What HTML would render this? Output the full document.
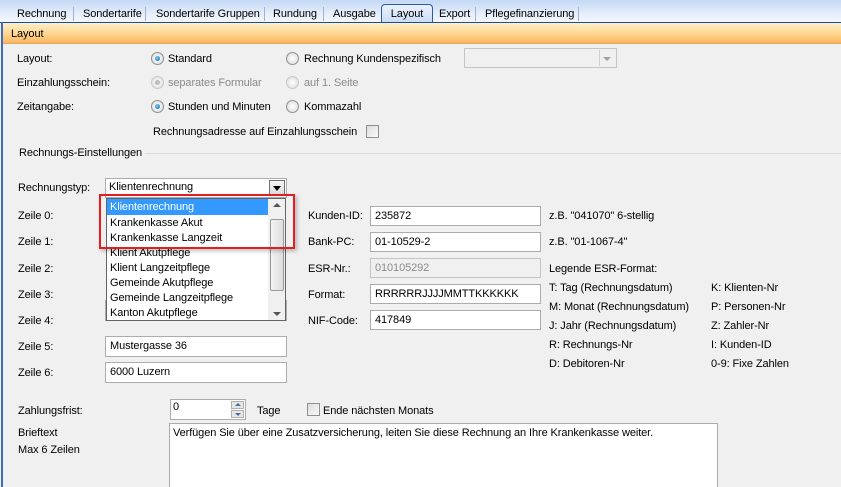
<!DOCTYPE html>
<html><head><meta charset="utf-8"><style>
*{margin:0;padding:0;box-sizing:border-box}
html,body{width:841px;height:487px;overflow:hidden}
body{background:#f0f0f0;font-family:"Liberation Sans",sans-serif;font-size:11px;letter-spacing:-0.1px;color:#000;position:relative}
.a{position:absolute;white-space:nowrap;line-height:14px}
.tabs{position:absolute;left:0;top:0;width:841px;height:23px;background:linear-gradient(#c3d8f4,#e6eefb 60%,#f5f8fd)}
.tab{position:absolute;top:7px;line-height:14px}
.sep{position:absolute;top:7px;width:1px;height:14px;background:#9fb4d4}
.sel{position:absolute;left:381px;top:4px;width:52px;height:19px;border:1px solid #2b5aa8;border-bottom:none;border-radius:4px 4px 0 0;background:linear-gradient(#eaf2fd,#c9dcf5);text-align:center;line-height:19px}
.blue{position:absolute;left:0;top:22px;width:841px;height:1px;background:#1b4c9e}
.lb{position:absolute;left:1px;top:22px;width:2px;height:465px;background:#3e6cc0}
.hdr{position:absolute;left:3px;top:23px;width:838px;height:21px;background:linear-gradient(#fff0c8,#ffd28a 60%,#ffb55c);border-bottom:1px solid #d7ac6a}
.in{position:absolute;background:#fff;border:1px solid #acacac;padding-left:4px;line-height:19px;height:21px;overflow:hidden;white-space:nowrap}
.dis{background:#f0f0f0;color:#8a8a8a;border-color:#c4c4c4}
.r{position:absolute;width:13px;height:13px;border-radius:50%;border:1px solid #8f8f8f;background:radial-gradient(#fff,#d8d8d8)}
.r.on::after{content:"";position:absolute;left:3px;top:3px;width:5px;height:5px;border-radius:50%;background:radial-gradient(circle at 40% 35%,#7fd0ff,#0b5fa8)}
.r.d{border-color:#c8c8c8}
.r.d.on::after{background:#bdbdbd}
.cb{position:absolute;width:13px;height:13px;border:1px solid #8f8f8f;background:linear-gradient(135deg,#dcdcdc,#fafafa)}
.g{color:#8a8a8a}
</style></head><body>
<div class="tabs"></div>
<div class="tab" style="left:17px">Rechnung</div><div class="sep" style="left:73px"></div>
<div class="tab" style="left:83px">Sondertarife</div><div class="sep" style="left:145px"></div>
<div class="tab" style="left:156px">Sondertarife Gruppen</div><div class="sep" style="left:264px"></div>
<div class="tab" style="left:273px">Rundung</div><div class="sep" style="left:323px"></div>
<div class="tab" style="left:333px">Ausgabe</div>
<div class="sel">Layout</div>
<div class="tab" style="left:439px">Export</div><div class="sep" style="left:475px"></div>
<div class="tab" style="left:485px">Pflegefinanzierung</div><div class="sep" style="left:578px"></div>
<div class="blue"></div>
<div class="hdr"></div>
<div class="a" style="left:11px;top:27px">Layout</div>
<div class="lb"></div>

<div class="a" style="left:17px;top:52px">Layout:</div>
<div class="r on" style="left:151px;top:52px"></div><div class="a" style="left:168px;top:52px">Standard</div>
<div class="r" style="left:286px;top:52px"></div><div class="a" style="left:304px;top:52px">Rechnung Kundenspezifisch</div>
<div class="in dis" style="left:464px;top:48px;width:153px;height:20px"></div>
<div style="position:absolute;left:599px;top:50px;width:1px;height:16px;background:#d0d0d0"></div>
<div style="position:absolute;left:603px;top:57px;border:4px solid transparent;border-top:4px solid #a0a0a0"></div>

<div class="a" style="left:17px;top:76px">Einzahlungsschein:</div>
<div class="r d on" style="left:151px;top:76px"></div><div class="a g" style="left:168px;top:76px">separates Formular</div>
<div class="r d" style="left:286px;top:76px"></div><div class="a g" style="left:304px;top:76px">auf 1. Seite</div>

<div class="a" style="left:17px;top:100px">Zeitangabe:</div>
<div class="r on" style="left:151px;top:100px"></div><div class="a" style="left:168px;top:100px">Stunden und Minuten</div>
<div class="r" style="left:286px;top:100px"></div><div class="a" style="left:304px;top:100px">Kommazahl</div>

<div class="a" style="left:153px;top:125px">Rechnungsadresse auf Einzahlungsschein</div>
<div class="cb" style="left:366px;top:125px"></div>

<div style="position:absolute;left:145px;top:153px;width:696px;height:1px;background:#d5dfe5"></div>
<div class="a" style="left:16px;top:146px;padding:0 3px;background:#f0f0f0">Rechnungs-Einstellungen</div>

<div class="a" style="left:18px;top:181px">Rechnungstyp:</div>
<div class="in" style="left:105px;top:178px;width:182px;height:20px;line-height:17px;padding-left:3px">Klientenrechnung</div>
<div style="position:absolute;left:269px;top:180px;width:16px;height:16px;border:1px solid #707070;background:linear-gradient(#f6f6f6,#dcdcdc)"></div>
<div style="position:absolute;left:273px;top:186px;border:4px solid transparent;border-top:5px solid #000"></div>

<div class="a" style="left:18px;top:209px">Zeile 0:</div>
<div class="a" style="left:18px;top:235px">Zeile 1:</div>
<div class="a" style="left:18px;top:262px">Zeile 2:</div>
<div class="a" style="left:18px;top:288px">Zeile 3:</div>
<div class="a" style="left:18px;top:314px">Zeile 4:</div>
<div class="a" style="left:18px;top:340px">Zeile 5:</div>
<div class="a" style="left:18px;top:366px">Zeile 6:</div>
<div class="in" style="left:105px;top:300px;width:182px;height:21px"></div>
<div class="in" style="left:105px;top:336px;width:182px">Mustergasse 36</div>
<div class="in" style="left:105px;top:362px;width:182px">6000 Luzern</div>

<div style="position:absolute;left:106px;top:198px;width:180px;height:123px;background:#fff;border:1px solid #646464"></div>
<div style="position:absolute;left:107px;top:199px;width:161px;height:16px;background:#3399ff"></div>
<div class="a" style="left:110px;top:200px;color:#fff">Klientenrechnung</div>
<div class="a" style="left:110px;top:216px">Krankenkasse Akut</div>
<div class="a" style="left:110px;top:231px">Krankenkasse Langzeit</div>
<div class="a" style="left:110px;top:246px">Klient Akutpflege</div>
<div class="a" style="left:110px;top:261px">Klient Langzeitpflege</div>
<div class="a" style="left:110px;top:276px">Gemeinde Akutpflege</div>
<div class="a" style="left:110px;top:291px">Gemeinde Langzeitpflege</div>
<div class="a" style="left:110px;top:306px">Kanton Akutpflege</div>
<div style="position:absolute;left:268px;top:199px;width:17px;height:121px;background:#f0f0f0"></div>
<div style="position:absolute;left:270px;top:219px;width:14px;height:72px;border:1px solid #9a9a9a;border-radius:2px;background:linear-gradient(90deg,#f2f2f2,#dedede)"></div>
<div style="position:absolute;left:273px;top:203px;border:4px solid transparent;border-bottom:4px solid #555;border-top:none"></div>
<div style="position:absolute;left:273px;top:312px;border:4px solid transparent;border-top:4px solid #555;border-bottom:none"></div>
<div style="position:absolute;left:99px;top:194px;width:196px;height:55px;border:2px solid #e02020;box-shadow:2px 2px 4px rgba(0,0,0,.25)"></div>

<div class="a" style="left:308px;top:209px">Kunden-ID:</div>
<div class="a" style="left:308px;top:235px">Bank-PC:</div>
<div class="a" style="left:308px;top:262px">ESR-Nr.:</div>
<div class="a" style="left:308px;top:288px">Format:</div>
<div class="a" style="left:308px;top:314px">NIF-Code:</div>
<div class="in" style="left:370px;top:206px;width:171px;height:20px;line-height:18px">235872</div>
<div class="in" style="left:370px;top:232px;width:171px;height:20px;line-height:18px">01-10529-2</div>
<div class="in dis" style="left:370px;top:258px;width:171px;height:20px;line-height:18px">010105292</div>
<div class="in" style="left:370px;top:284px;width:171px;height:20px;line-height:18px">RRRRRRJJJJMMTTKKKKKK</div>
<div class="in" style="left:370px;top:310px;width:171px;height:20px;line-height:18px">417849</div>

<div class="a" style="left:549px;top:209px">z.B. "041070" 6-stellig</div>
<div class="a" style="left:549px;top:235px">z.B. "01-1067-4"</div>
<div class="a" style="left:549px;top:262px">Legende ESR-Format:</div>
<div class="a" style="left:549px;top:281px">T: Tag (Rechnungsdatum)</div>
<div class="a" style="left:549px;top:300px">M: Monat (Rechnungsdatum)</div>
<div class="a" style="left:549px;top:319px">J: Jahr (Rechnungsdatum)</div>
<div class="a" style="left:549px;top:338px">R: Rechnungs-Nr</div>
<div class="a" style="left:549px;top:357px">D: Debitoren-Nr</div>
<div class="a" style="left:711px;top:281px">K: Klienten-Nr</div>
<div class="a" style="left:711px;top:300px">P: Personen-Nr</div>
<div class="a" style="left:711px;top:319px">Z: Zahler-Nr</div>
<div class="a" style="left:711px;top:338px">I: Kunden-ID</div>
<div class="a" style="left:711px;top:357px">0-9: Fixe Zahlen</div>

<div class="a" style="left:18px;top:404px">Zahlungsfrist:</div>
<div class="in" style="left:170px;top:399px;width:76px;height:21px;padding-left:2px;line-height:15px">0</div>
<div style="position:absolute;left:231px;top:401px;width:13px;height:8px;background:#e6e6e6;border:1px solid #b0b0b0"></div>
<div style="position:absolute;left:231px;top:410px;width:13px;height:8px;background:#e6e6e6;border:1px solid #b0b0b0"></div>
<div style="position:absolute;left:235px;top:403px;border:3px solid transparent;border-bottom:3px solid #4a6da0;border-top:none"></div>
<div style="position:absolute;left:235px;top:413px;border:3px solid transparent;border-top:3px solid #4a6da0;border-bottom:none"></div>
<div class="a" style="left:257px;top:404px">Tage</div>
<div class="cb" style="left:307px;top:403px"></div>
<div class="a" style="left:323px;top:404px">Ende nächsten Monats</div>

<div class="a" style="left:18px;top:426px">Brieftext</div>
<div class="a" style="left:18px;top:443px">Max 6 Zeilen</div>
<div class="in" style="left:169px;top:423px;width:549px;height:70px;padding-left:3px;line-height:18px">Verfügen Sie über eine Zusatzversicherung, leiten Sie diese Rechnung an Ihre Krankenkasse weiter.</div>
</body></html>
